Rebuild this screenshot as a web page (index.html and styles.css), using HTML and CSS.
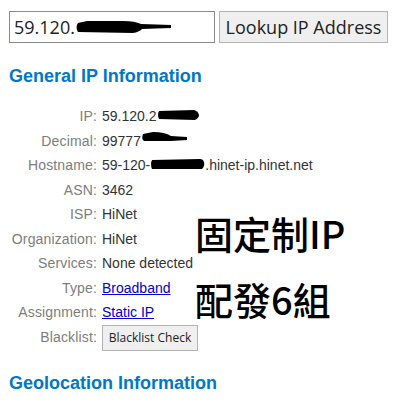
FILE: index.html
```html
<!DOCTYPE html>
<html lang="zh-TW">
<head>
  <meta charset="UTF-8">
  <title>IP Lookup</title>
  <link rel="stylesheet" href="styles.css">
</head>
<body>
  <div class="page">
    <form class="lookup" onsubmit="return false">
      <div class="ip-field">
        <input type="text" value="59.120.">
        <svg class="scribble" width="96" height="14" viewBox="0 0 96 14">
          <path d="M3,3 Q0,7 3,12 L58,13 Q64,12 67,9 L96,8 L96,5 L66,4 Q60,1 48,1 L12,1 Z" fill="#000"/>
        </svg>
      </div>
      <button type="submit" class="lookup-btn">Lookup IP Address</button>
    </form>

    <h3 class="section">General IP Information</h3>

    <div class="info">
      <div class="label">IP:</div>
      <div class="value">59.120.2<svg class="blob" width="42" height="12" viewBox="0 0 42 12"><path d="M2,2 Q0,6 2,10 L38,11 Q42,9 42,6 Q41,2 37,1 Z" fill="#000"/></svg></div>

      <div class="label">Decimal:</div>
      <div class="value">99777<svg class="blob blob-low" width="46" height="12" viewBox="0 0 46 12"><path d="M2,3 Q0,8 3,10 L30,10 L46,9 L46,6 L30,5 Q24,1 12,1 Z" fill="#000"/></svg></div>

      <div class="label">Hostname:</div>
      <div class="value">59-120-<svg class="blob" width="55" height="12" viewBox="0 0 55 12"><path d="M2,2 Q0,6 2,11 L52,11 Q55,8 54,4 Q53,1 50,1 Z" fill="#000"/></svg>.hinet-ip.hinet.net</div>

      <div class="label">ASN:</div>
      <div class="value">3462</div>

      <div class="label">ISP:</div>
      <div class="value">HiNet</div>

      <div class="label">Organization:</div>
      <div class="value">HiNet</div>

      <div class="label">Services:</div>
      <div class="value">None detected</div>

      <div class="label">Type:</div>
      <div class="value"><a href="#">Broadband</a></div>

      <div class="label">Assignment:</div>
      <div class="value"><a href="#">Static IP</a></div>

      <div class="label">Blacklist:</div>
      <div class="value value-btn"><button type="button" class="bl-btn">Blacklist Check</button></div>
    </div>

    <h3 class="section geo">Geolocation Information</h3>

    <!-- 圖上加的註記 -->
    <div class="note">固定制IP<br>配發6組</div>
  </div>
</body>
</html>
```

FILE: styles.css
```css
body {
  margin: 0;
  background: #fff;
  font-family: "Liberation Sans", Arial, sans-serif;
  color: #333;
}

.page {
  position: relative;
  padding: 11px 8px 0 9px;
}

.lookup {
  display: flex;
  gap: 4px;
  margin: 0;
}

.ip-field {
  position: relative;
}

.ip-field input {
  width: 206px;
  height: 32px;
  box-sizing: border-box;
  border: 1px solid #8a8a8a;
  padding: 0 4px;
  font-family: "Open Sans", sans-serif;
  font-size: 18px;
  color: #222;
  outline: none;
}

.scribble {
  position: absolute;
  left: 66px;
  top: 9px;
}

.lookup-btn {
  width: 169px;
  height: 32px;
  box-sizing: border-box;
  border: 1px solid #b4b4b4;
  background: #efefef;
  padding: 0;
  font-family: "Open Sans", sans-serif;
  font-size: 18px;
  color: #222;
}

.section {
  margin: 22px 0 0;
  font-size: 18px;
  line-height: 22px;
  font-weight: bold;
  color: #0077c8;
}

.info {
  display: grid;
  grid-template-columns: 88px auto;
  column-gap: 5px;
  margin-top: 17px;
  font-size: 14px;
  line-height: 24.5px;
}

.label {
  text-align: right;
  color: #7d7d7d;
  white-space: nowrap;
  letter-spacing: 0.15px;
}

.value {
  color: #333;
  white-space: nowrap;
}

.value a {
  color: #0000cc;
}

.blob {
  vertical-align: baseline;
}

.blob-low {
  vertical-align: 3px;
}

.value-btn {
  display: flex;
  align-items: center;
}

.bl-btn {
  width: 96px;
  height: 26px;
  box-sizing: border-box;
  border: 1px solid #b4b4b4;
  background: #efefef;
  padding: 0;
  font-family: "Open Sans", sans-serif;
  font-size: 12px;
  color: #222;
}

.geo {
  margin-top: 21px;
}

.note {
  position: absolute;
  left: 195px;
  top: 200px;
  font-family: "Noto Sans CJK TC", sans-serif;
  font-size: 38px;
  font-weight: 500;
  line-height: 66px;
  color: #000;
}
```
